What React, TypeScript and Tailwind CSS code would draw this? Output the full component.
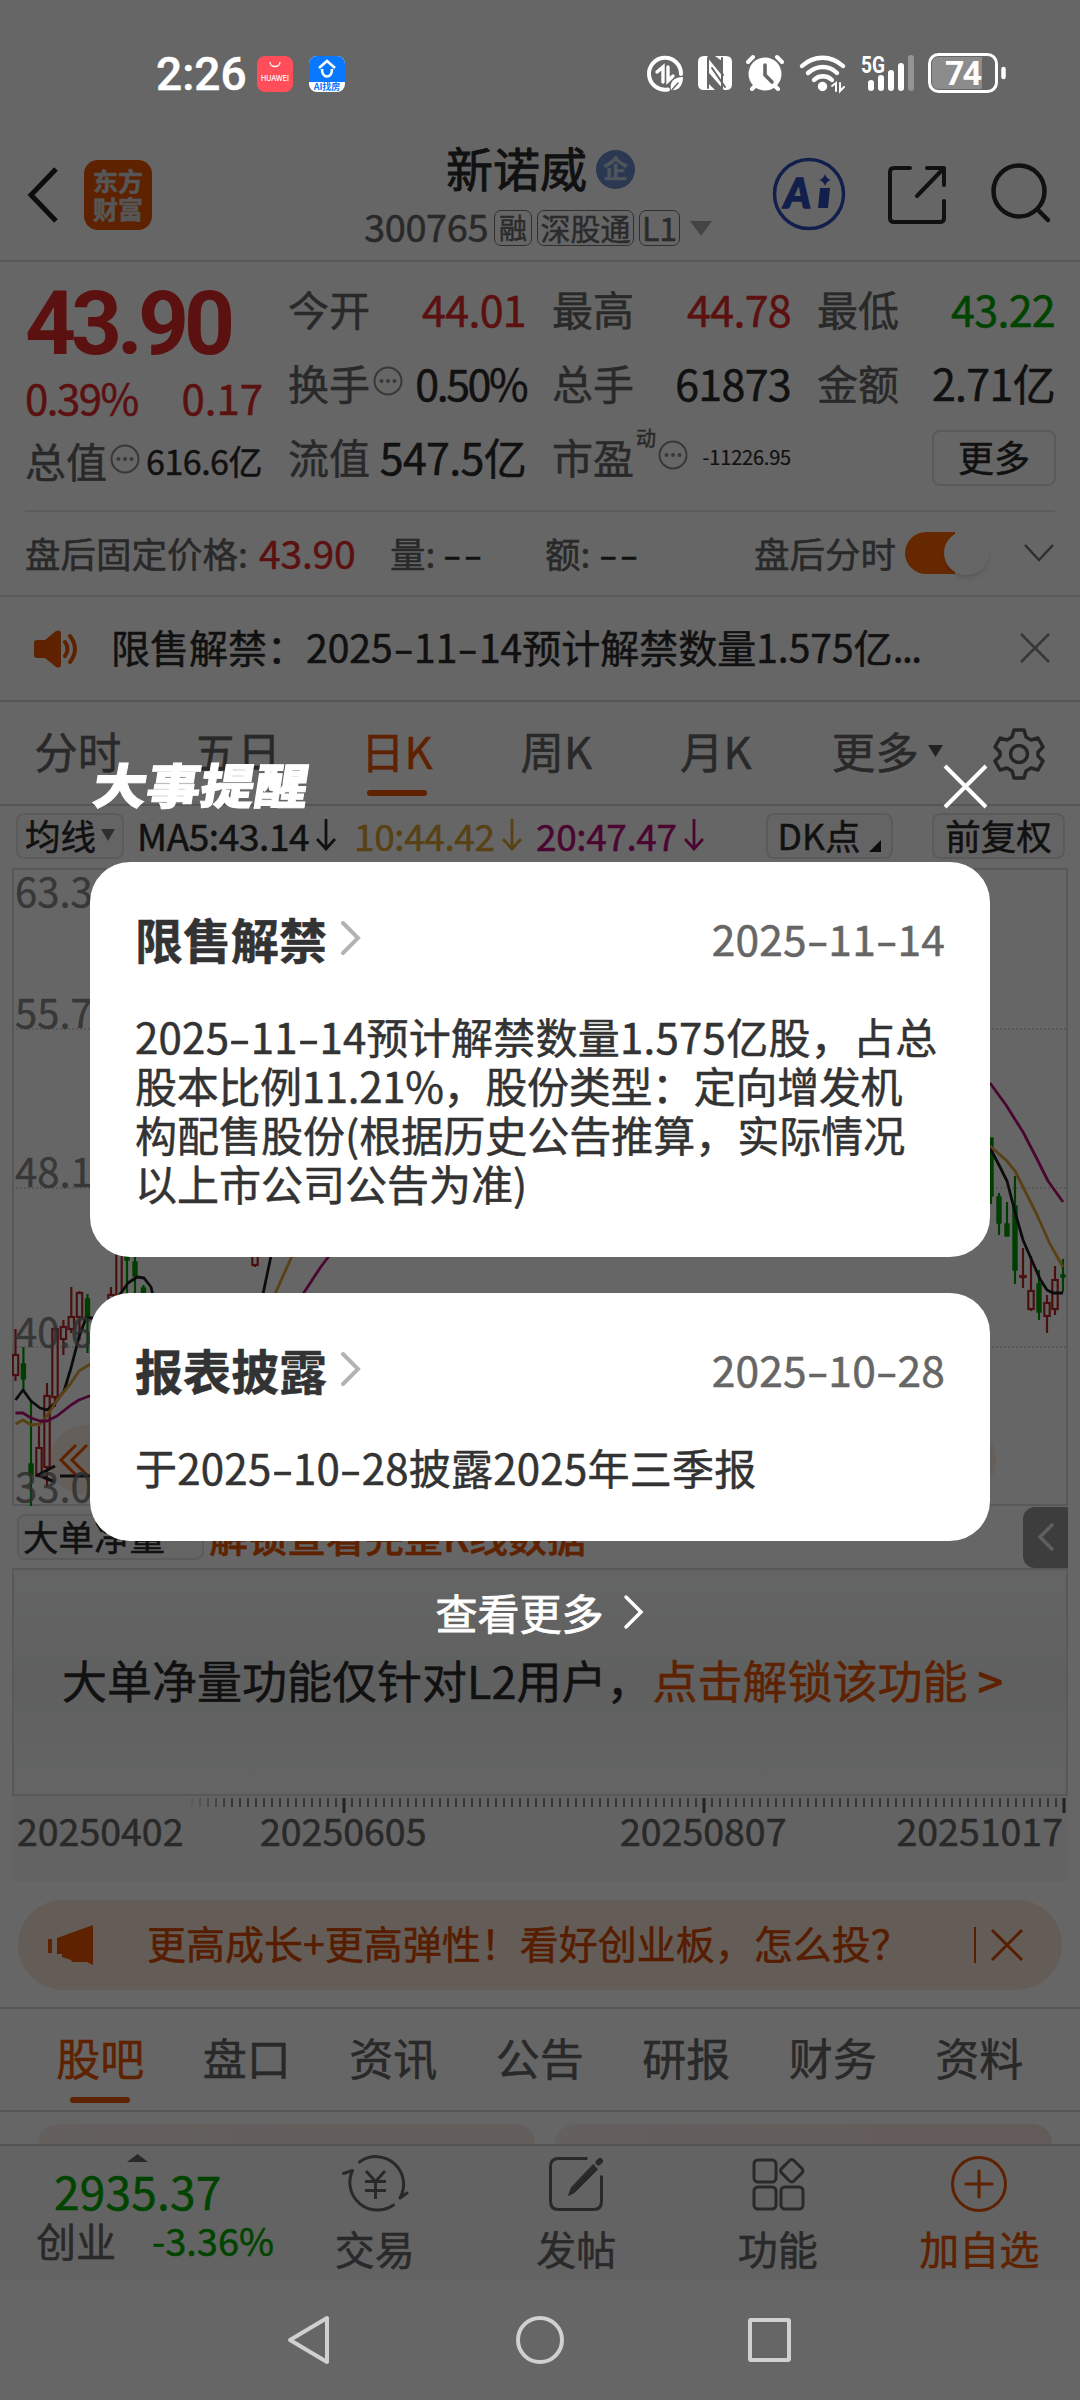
import type { ReactNode } from 'react'
import clsx from 'clsx'

type Candle = {
    x: number
    high: number
    low: number
    top: number
    bottom: number
    up: boolean
}

interface Reminder {
    title: string
    date: string
    lines: string[]
}

const CANDLES: Candle[] = [
    { x: 15.5, high: 1329, low: 1381, top: 1355, bottom: 1375, up: true },
    { x: 23.4, high: 1347, low: 1390, top: 1364, bottom: 1379, up: false },
    { x: 31, high: 1402, low: 1506, top: 1464, bottom: 1475, up: false },
    { x: 39, high: 1426, low: 1476, top: 1448, bottom: 1476, up: true },
    { x: 47, high: 1383, low: 1486, top: 1396, bottom: 1467, up: true },
    { x: 55, high: 1329, low: 1407, top: 1329, bottom: 1397, up: true },
    { x: 63.4, high: 1320, low: 1355, top: 1327, bottom: 1339, up: true },
    { x: 71.3, high: 1287, low: 1333, top: 1317, bottom: 1329, up: true },
    { x: 79.5, high: 1291, low: 1340, top: 1293, bottom: 1317, up: true },
    { x: 87.5, high: 1294, low: 1353, top: 1299, bottom: 1318, up: false },
    { x: 111, high: 1287, low: 1310, top: 1295, bottom: 1307, up: true },
    { x: 119, high: 1240, low: 1300, top: 1240, bottom: 1300, up: true },
    { x: 127, high: 1240, low: 1294, top: 1240, bottom: 1260, up: false },
    { x: 135, high: 1250, low: 1300, top: 1262, bottom: 1276, up: false },
    { x: 143.5, high: 1285, low: 1300, top: 1288, bottom: 1300, up: false },
    { x: 255, high: 1240, low: 1267, top: 1240, bottom: 1265, up: true },
    { x: 991, high: 1138, low: 1204, top: 1138, bottom: 1196, up: false },
    { x: 999, high: 1193, low: 1235, top: 1197, bottom: 1223, up: false },
    { x: 1007, high: 1202, low: 1236, top: 1224, bottom: 1236, up: false },
    { x: 1015, high: 1176, low: 1284, top: 1206, bottom: 1270, up: false },
    { x: 1023, high: 1248, low: 1288, top: 1276, bottom: 1277, up: true },
    { x: 1031, high: 1256, low: 1311, top: 1291, bottom: 1309, up: true },
    { x: 1039, high: 1270, low: 1320, top: 1284, bottom: 1312, up: false },
    { x: 1047, high: 1295, low: 1333, top: 1303, bottom: 1316, up: true },
    { x: 1055, high: 1266, low: 1315, top: 1280, bottom: 1309, up: true },
    { x: 1063, high: 1259, low: 1292, top: 1275, bottom: 1277, up: false },
]

const MA_LINES = [
    { color: '#202020', points: '15.5,1400 23,1390 31,1401 40,1408 47,1410 55,1403 64,1391 71,1368 79,1337 86,1318 95,1318 108,1309 121,1293 128,1283 137,1277 144,1278 151,1287 154,1300' },
    { color: '#202020', points: '263,1294 271,1256' },
    { color: '#202020', points: '990,1148 1000,1167 1007,1181 1015,1212 1023,1240 1033,1263 1040,1279 1047,1290 1053,1293 1063,1293' },
    { color: '#dda233', points: '15.5,1424 23,1420 31,1425 40,1424 47,1416 57,1400 71,1383 79,1371 92,1363' },
    { color: '#dda233', points: '275,1294 292,1256' },
    { color: '#dda233', points: '990,1146 1006,1160 1015,1171 1023,1187 1037,1215 1050,1244 1063,1267' },
    { color: '#b80f7a', points: '15.5,1413 23,1413 31,1418 40,1421 47,1421 57,1416 71,1405 79,1400 92,1395' },
    { color: '#b80f7a', points: '303,1294 320,1268 329,1256' },
    { color: '#b80f7a', points: '990,1083 1006,1105 1023,1132 1037,1159 1048,1181 1063,1202' },
]

const PRICE_LABELS = [
    { text: '63.36', y: 907 },
    { text: '55.77', y: 1028 },
    { text: '48.18', y: 1187 },
    { text: '40.60', y: 1347 },
    { text: '33.01', y: 1502 },
]

const REMINDERS: Reminder[] = [
    {
        title: '限售解禁',
        date: '2025-11-14',
        lines: [
            '2025-11-14预计解禁数量1.575亿股，占总',
            '股本比例11.21%，股份类型：定向增发机',
            '构配售股份(根据历史公告推算，实际情况',
            '以上市公司公告为准)',
        ],
    },
    { title: '报表披露', date: '2025-10-28', lines: ['于2025-10-28披露2025年三季报'] },
]

const CHART_TABS = ['分时', '五日', '日K', '周K', '月K', '更多']
const INFO_TABS = ['股吧', '盘口', '资讯', '公告', '研报', '财务', '资料']

// Dates use a wide hyphen, close to the width of a digit
function Dashed({ text }: { text: string }) {
    return (
        <>
            {text.split('-').map((part, i) => (
                <span key={i}>
                    {i > 0 && <span className="inline-block w-[21.5px] text-center tracking-normal scale-x-150">-</span>}
                    {part}
                </span>
            ))}
        </>
    )
}

function InfoDot() {
    return (
        <svg className="w-[30px] h-[30px] ml-[3px] mb-[4px] shrink-0" viewBox="0 0 30 30" fill="none" stroke="#8c8c8c" strokeWidth="2">
            <circle cx="15" cy="15" r="13.5" />
            <g fill="#8c8c8c" stroke="none">
                <circle cx="8.5" cy="15" r="2" />
                <circle cx="15" cy="15" r="2" />
                <circle cx="21.5" cy="15" r="2" />
            </g>
        </svg>
    )
}

function Stat({ label, value, tone = 'text-[#2b2b2b]', dot = false }: { label: string; value: string; tone?: string; dot?: boolean }) {
    return (
        <div className="flex items-center justify-between text-[41px] leading-none whitespace-nowrap">
            <span className="flex items-center text-[#666]">
                {label}
                {dot && <InfoDot />}
            </span>
            <span className={clsx('text-[43px] leading-[41px]', dot ? 'tracking-[-2.5px]' : 'tracking-[-0.7px]', tone)}>{value}</span>
        </div>
    )
}

function StatusBar() {
    return (
        <div className="relative z-20 h-[116px] pt-[53px] pl-[156px] pr-[72px] flex items-start justify-between text-white">
            <div className="flex items-center h-[42px]">
                <span className="w-[101px] text-[46px] leading-none font-medium font-['Roboto']">2:26</span>
                <div className="w-9 h-9 rounded-[8px] bg-[#ff4d5a] flex flex-col items-center">
                    <svg className="w-4 h-4 mt-1" viewBox="0 0 16 16" fill="none" stroke="#fff" strokeWidth="1.3">
                        <path d="M3 2c0 6 10 6 10 0" />
                    </svg>
                    <span className="text-[7px] leading-none font-medium -mt-[1px] font-['Inter'] [-webkit-text-stroke:0px]">HUAWEI</span>
                </div>
                <div className="ml-4 w-9 h-9 rounded-[8px] bg-white overflow-hidden flex flex-col items-center">
                    <div className="w-9 h-[26px] bg-[#0878ff] flex justify-center">
                        <svg className="w-6 h-6" viewBox="0 0 24 24" fill="none" stroke="#fff" strokeWidth="2.6">
                            <path d="M4 12 12 5l8 7M7 13c0 10 10 10 10 0" />
                        </svg>
                    </div>
                    <span className="text-[9px] leading-[10px] font-bold text-[#0878ff] [-webkit-text-stroke:0px]">AI找房</span>
                </div>
            </div>
            <svg className="w-[364px] h-[42px]" viewBox="644 53 364 42" fill="none" stroke="#fff" strokeLinecap="round">
                <path d="M668 89.500A16 16 0 1 1 681 74" strokeWidth="4" />
                <path d="M657 72l6-5v15M668 67v14l5-5" strokeWidth="3.400" />
                <path d="M671 90c-2-9 4-13 12-13 0 9-5 14-12 13z" fill="#fff" stroke="none" />
                <path d="M672 90l6-7" stroke="#666" strokeWidth="1.500" />
                <path d="M704 56h3l15 16V61l-7-5h11q6 0 6 6v22q0 6-6 6h-2L709 73v11l6 6h-11q-6 0-6-6V62q0-6 6-6z" fill="#fff" stroke="none" />
                <path d="M708 58v30M722 58v30" stroke="#666" strokeWidth="2" />
                <path d="M712 68l13 19M710 59l13 16" stroke="#666" strokeWidth="2" />
                <circle cx="765" cy="74" r="16.500" fill="#fff" stroke="none" />
                <path d="M748 62l5-5M782 62l-5-5" strokeWidth="4" />
                <path d="M752 89l4-4M778 89l-4-4" strokeWidth="4" />
                <path d="M765 65v10l7 7" stroke="#666" strokeWidth="3.600" />
                <path d="M802 66c12-11 29-11 41 0M808 73c9-8 21-8 29 0M814 80c5-5 13-5 18 0" strokeWidth="4.400" />
                <circle cx="822.500" cy="86.500" r="4.700" fill="#fff" stroke="none" />
                <path d="M832 86l4-3v8M840 83v8l4-4" strokeWidth="2" />
                <text x="861" y="73" fill="#fff" stroke="none" fontFamily="Roboto" fontWeight="700" fontSize="24" textLength="24" lengthAdjust="spacingAndGlyphs">5G</text>
                <path d="M871 83v5M881 78v10M891 73v15M901 66v22" strokeWidth="6" />
                <path d="M911 58v30" stroke="#949494" strokeWidth="6" />
                <rect x="929.500" y="54.500" width="67" height="37" rx="9" strokeWidth="3" />
                <path d="M939 57h43v32h-43q-7 0-7-7V64q0-7 7-7z" fill="#8c8c8c" stroke="none" />
                <path d="M1003.500 69v8" strokeWidth="4.500" />
                <text x="945" y="85" fill="#fff" stroke="none" fontFamily="Roboto" fontWeight="700" fontSize="34" textLength="37">74</text>
            </svg>
        </div>
    )
}

function Header() {
    return (
        <header className="h-[146px] shrink-0 border-b-2 border-[#dcdcdc] flex items-start px-[26px] text-[#333]">
            <svg className="w-8 h-14 mt-[51px]" viewBox="0 0 32 56" fill="none" stroke="#222" strokeWidth="5">
                <path d="M30 2 5 28l25 26" />
            </svg>
            <div className="mt-[44px] ml-[26px] w-[68px] h-[70px] rounded-[14px] bg-[#ea5504] text-[#d8d8d8] text-[25px] leading-[28px] font-bold flex flex-col items-center justify-center pb-[3px]">
                <span>东方</span>
                <span>财富</span>
            </div>
            <div className="ml-[212px] w-[354px]">
                <div className="mt-[26px] ml-[82px] h-[54px] flex items-center">
                    <span className="mb-[5px] text-[47px] leading-none text-[#2b2b2b] [-webkit-text-stroke:0.9px]">新诺威</span>
                    <span className="ml-[9px] pb-[3px] w-[39px] h-[39px] rounded-full bg-[#6a8ccc] text-[#c3cfe6] text-[25px] leading-none font-bold flex items-center justify-center">企</span>
                </div>
                <div className="mt-[14px] h-[36px] flex items-center text-[30px] leading-none text-[#6b6b6b] whitespace-nowrap">
                    <span className="mb-[4px] w-[130px] text-[38px] tracking-[-0.4px] text-[#666]">300765</span>
                    <span className="pb-[3px] w-[38px] h-9 border-[1.5px] border-[#777] rounded-[7px] flex items-center justify-center text-[28px]">融</span>
                    <span className="pb-[3px] ml-[5px] w-[97px] h-9 border-[1.5px] border-[#777] rounded-[7px] flex items-center justify-center">深股通</span>
                    <span className="pb-[3px] ml-[5px] w-[41px] h-9 border-[1.5px] border-[#777] rounded-[7px] flex items-center justify-center text-[32px]">L1</span>
                    <svg className="ml-[10px] w-[22px] h-[15px]" viewBox="0 0 22 15" fill="#aaa">
                        <path d="M0 0h22L11 15z" />
                    </svg>
                </div>
            </div>
            <svg className="mt-[41px] ml-[54px] w-[74px] h-[74px]" viewBox="0 0 74 74" fill="#2f4fbd">
                <circle cx="37" cy="37" r="34.500" fill="none" stroke="#2f4fbd" strokeWidth="3.500" />
                <text x="12" y="51" fontFamily="Lato" fontWeight="900" fontStyle="italic" fontSize="41" stroke="#2f4fbd" strokeWidth="1.500">A</text>
                <path d="M48 31h10l-2 20H46z" />
                <path d="M53 17q1.500 5 6 6-4.500 1-6 6-1.500-5-6-6 4.500-1 6-6z" />
            </svg>
            <svg className="mt-[47px] ml-[39px] w-[64px] h-[64px]" viewBox="0 0 64 64" fill="none" stroke="#2b2b2b" strokeWidth="4" strokeLinecap="round" strokeLinejoin="round">
                <path d="M25 5H9q-4 0-4 4v46q0 4 4 4h46q4 0 4-4V38M42 5h17v17M59 5 32 33" />
            </svg>
            <svg className="mt-[46px] ml-[39px] w-[64px] h-[64px] shrink-0" viewBox="0 0 64 64" fill="none" stroke="#2b2b2b" strokeWidth="4.500" strokeLinecap="round">
                <circle cx="31" cy="29" r="25.500" />
                <path d="m50 48 10 10" />
            </svg>
        </header>
    )
}

function Quote() {
    return (
        <section className="mx-[25px] h-[250px] shrink-0 border-b-2 border-[#e6e6e6] pt-[16px] grid grid-cols-[237px_238px_239px_238px] gap-x-[26px]">
            <div className="flex flex-col text-[#e52b2b]">
                <span className="h-[88px] mt-[2px] text-[89px] leading-[88px] font-bold font-['Roboto'] tracking-[-5px] [-webkit-text-stroke:0px]">43.90</span>
                <div className="mt-[7px] h-[44px] flex items-center justify-between text-[42px] leading-none">
                    <span className="tracking-[-1.5px]">0.39%</span>
                    <span className="-mr-px">0.17</span>
                </div>
                <div className="mt-[21px] flex items-center justify-between text-[41px] leading-none text-[#666] whitespace-nowrap">
                    <span className="flex items-center">总值<InfoDot /></span>
                    <span className="text-[34px] text-[#2b2b2b] tracking-[-0.500px]">616.6亿</span>
                </div>
            </div>
            <div className="flex flex-col gap-[33px] pt-[10px]">
                <Stat label="今开" value="44.01" tone="text-[#e52b2b]" />
                <Stat label="换手" value="0.50%" dot />
                <Stat label="流值" value="547.5亿" />
            </div>
            <div className="flex flex-col gap-[33px] pt-[10px]">
                <Stat label="最高" value="44.78" tone="text-[#e52b2b]" />
                <Stat label="总手" value="61873" />
                <div className="h-[41px] flex items-center text-[41px] leading-none text-[#666] whitespace-nowrap">
                    市盈
                    <span className="text-[20px] -mt-[38px] ml-[2px]">动</span>
                    <span className="-ml-[1px] flex"><InfoDot /></span>
                    <span className="ml-auto text-[20px] text-[#2b2b2b] tracking-[-0.200px] [-webkit-text-stroke:0.2px]">-11226.95</span>
                </div>
            </div>
            <div className="flex flex-col gap-[33px] pt-[10px]">
                <Stat label="最低" value="43.22" tone="text-[#00aa00]" />
                <Stat label="金额" value="2.71亿" />
                <button className="self-end -mt-[6px] pb-[5px] -mr-px w-[124px] h-[56px] rounded-[8px] border-2 border-[#e0e0e0] text-[36px] leading-none text-[#2b2b2b]">更多</button>
            </div>
        </section>
    )
}

function AfterHours() {
    return (
        <section className="h-[85px] shrink-0 border-b-2 border-[#e6e6e6] pb-[2px] pl-[25px] pr-[26px] flex items-center text-[35.5px] leading-none text-[#666] whitespace-nowrap">
            <span className="w-[234px]">盘后固定价格:</span>
            <span className="w-[131px] text-[39px] text-[#e52b2b] tracking-[-0.2px]">43.90</span>
            <span className="w-[53px]">量:</span>
            <span className="w-[102px] text-[#2b2b2b]"><span className="inline-block origin-left scale-x-150 tracking-[1.500px]">--</span></span>
            <span className="w-[54px]">额:</span>
            <span className="w-[155px] text-[#2b2b2b]"><span className="inline-block origin-left scale-x-150 tracking-[1.500px]">--</span></span>
            <span>盘后分时</span>
            <span className="ml-[9px] w-[84px] h-[42px] rounded-full bg-gradient-to-r from-[#ff6400] from-60% to-white to-60% flex justify-end">
                <span className="w-[45px] h-[44px] -mt-px rounded-full bg-white shadow-md" />
            </span>
            <svg className="ml-auto w-[30px] h-[18px]" viewBox="0 0 30 18" fill="none" stroke="#777" strokeWidth="2.500">
                <path d="m1 1 14 15L29 1" />
            </svg>
        </section>
    )
}

function Notice() {
    return (
        <section className="h-[105px] shrink-0 border-b-2 border-[#d4d4d4] pl-[34px] pr-[29px] flex items-center">
            <svg className="w-[46px] h-[38px]" viewBox="0 0 46 38" fill="#ea5504">
                <path d="M3 10h8L22 1q5-2 5 3v30q0 5-5 3l-11-9H3q-3 0-3-3V13q0-3 3-3z" />
                <path d="M31 12q5 7 0 14M36 6q10 13 0 26" fill="none" stroke="#ea5504" strokeWidth="4" strokeLinecap="round" />
            </svg>
            <span className="ml-[31px] mb-[4px] text-[39px] leading-none text-[#2b2b2b] whitespace-nowrap">
                限售解禁：<Dashed text="2025-11-14预计解禁数量1.575亿" />
                <span className="tracking-[-1.500px]">...</span>
            </span>
            <svg className="ml-auto w-[32px] h-[32px] mb-[2px]" viewBox="0 0 32 32" stroke="#8a8a8a" strokeWidth="2.600">
                <path d="m2 2 28 28M30 2 2 30" />
            </svg>
        </section>
    )
}

function ChartTabs() {
    return (
        <nav className="h-[104px] shrink-0 border-b-2 border-[#d4d4d4] flex text-[43.500px] leading-none text-[#666]">
            {CHART_TABS.map((tab) => (
                <div key={tab} className={clsx('w-[159.500px] flex flex-col items-center pr-[4px]', tab === '日K' && 'text-[#ea5504]')}>
                    <span className="mt-[26px] h-[46px] flex items-center">
                        {tab}
                        {tab === '更多' && (
                            <svg className="ml-[9px] -mr-[24px] w-[15px] h-[12px]" viewBox="0 0 15 12" fill="#555">
                                <path d="M0 0h15L7.500 12z" />
                            </svg>
                        )}
                    </span>
                    {tab === '日K' && <span className="mt-[16px] w-[60px] h-[6px] rounded-full bg-[#ea5504]" />}
                </div>
            ))}
            <svg className="mt-[25px] ml-[35px] w-[54px] h-[54px]" viewBox="0 0 54 54" fill="none" stroke="#5c5c5c" strokeWidth="3.500" strokeLinejoin="round">
                <path d="M22 3h10l2 7 5 3 7-2 5 9-5 5v4l5 5-5 9-7-2-5 3-2 7H22l-2-7-5-3-7 2-5-9 5-5v-4l-5-5 5-9 7 2 5-3z" />
                <circle cx="27" cy="27" r="8.500" />
            </svg>
        </nav>
    )
}

function Pill({ className, children }: { className?: string; children: ReactNode }) {
    return (
        <span className={clsx('h-[46px] pb-[3px] rounded-[8px] border-2 border-[#e4e4e4] bg-[#fafafa] flex items-center text-[35.500px] text-[#2b2b2b]', className)}>
            {children}
        </span>
    )
}

function DownArrow() {
    return (
        <svg className="ml-[7px] w-[20px] h-[32px] shrink-0" viewBox="0 0 20 32" fill="none" stroke="currentColor" strokeWidth="2.800">
            <path d="M10 0v29M1 20l9 10 9-10" />
        </svg>
    )
}

function MaRow() {
    return (
        <div className="h-[62px] shrink-0 pl-[16px] pr-[15px] pt-[7px] flex items-start leading-none whitespace-nowrap">
            <Pill className="w-[108px] justify-center">
                均线
                <svg className="ml-[5px] w-[14px] h-[12px]" viewBox="0 0 14 12" fill="#777"><path d="M0 0h14L7 12z" /></svg>
            </Pill>
            <div className="h-[44px] ml-[13px] flex items-center text-[37px] tracking-[-0.400px]">
                <span className="w-[217px] flex items-center text-[#2b2b2b]">MA5:43.14<DownArrow /></span>
                <span className="w-[182px] flex items-center text-[#dda233]">10:44.42<DownArrow /></span>
                <span className="w-[190px] flex items-center text-[#b80f7a]">20:47.47<DownArrow /></span>
            </div>
            <Pill className="ml-auto w-[127px] justify-center">
                DK点
                <svg className="ml-[9px] mt-[22px] w-[12px] h-[12px]" viewBox="0 0 12 12" fill="#222"><path d="M12 0v12H0z" /></svg>
            </Pill>
            <Pill className="ml-[39px] w-[133px] justify-center">前复权</Pill>
        </div>
    )
}

function KLineChart() {
    return (
        <svg className="ml-3 w-[1056px] h-[638px] shrink-0" viewBox="12 868 1056 638" fill="none">
            <rect x="13" y="869" width="1054" height="636" stroke="#dcdcdc" strokeWidth="2" />
            {[1029, 1188, 1347].map((y) => (
                <path key={y} d={`M12 ${y}H1068`} stroke="#bbb" strokeWidth="1" strokeDasharray="2 2" />
            ))}
            {CANDLES.map((c) => {
                const color = c.up ? '#b82a2a' : '#009a00'
                return (
                    <g key={c.x} stroke={color} strokeWidth="2.200">
                        <path d={c.up ? `M${c.x} ${c.high}V${c.top}M${c.x} ${c.bottom}V${c.low}` : `M${c.x} ${c.high}V${c.low}`} />
                        <rect
                            x={c.x - (c.up ? 2.7 : 2)}
                            y={c.top}
                            width={c.up ? 5.4 : 4}
                            height={c.bottom - c.top}
                            fill={c.up ? 'none' : color}
                            strokeWidth={c.up ? 2.2 : 1.4}
                        />
                    </g>
                )
            })}
            {MA_LINES.map((line) => (
                <polyline key={line.points} points={line.points} stroke={line.color} strokeWidth="2.800" strokeLinejoin="round" />
            ))}
            <rect x="50" y="1425" width="946" height="70" rx="35" fill="#ea5504" opacity="0.1" />
            <path d="m76 1445-15 15 15 15M87 1445l-15 15 15 15" stroke="#ea5504" strokeWidth="3" />
            <path d="m55 1466-17 9 17 7M60 1476h32" stroke="#222" strokeWidth="3" />
            {PRICE_LABELS.map((l) => (
                <text key={l.text} x="15" y={l.y} fill="#777" fillOpacity="0.850" stroke="#777" strokeOpacity="0.6" strokeWidth="0.600" fontSize="40" fontFamily="Noto Sans CJK SC">{l.text}</text>
            ))}
        </svg>
    )
}

function BigOrders() {
    return (
        <>
            <div className="h-[62px] shrink-0 pl-[17px] pr-3 flex items-center leading-none">
                <Pill className="w-[187px] pl-[4px]">
                    大单净量
                    <svg className="ml-[12px] w-[14px] h-[12px]" viewBox="0 0 14 12" fill="#777"><path d="M0 0h14L7 12z" /></svg>
                </Pill>
                <span className="ml-[5px] mb-[4px] text-[39px] font-medium text-[#ea5504]">解锁查看完整K线数据</span>
                <span className="ml-auto w-[45px] h-[61px] rounded-l-[12px] bg-[#989898] flex items-center justify-center">
                    <svg className="w-[16px] h-[28px]" viewBox="0 0 16 28" fill="none" stroke="#eee" strokeWidth="3.500" strokeLinecap="round">
                        <path d="M14 2 2 14l12 12" />
                    </svg>
                </span>
            </div>
            <div className="mx-3 h-[228px] shrink-0 border-2 border-[#dcdcdc] bg-gradient-to-b from-[#fafbfb] via-[#eff0f0] to-[#f9fbfa] flex items-center pb-[6px] pl-[48px] text-[45px] leading-none whitespace-nowrap">
                <span className="text-[#2b2b2b]">大单净量功能仅针对L2用户，</span>
                <span className="ml-[1px] text-[#ea5504]">点击解锁该功能 <b className="font-medium">&gt;</b></span>
            </div>
            <div className="mx-3 h-[86px] shrink-0 bg-[#f8f8f8]">
                <svg className="w-[1056px] h-[20px]" viewBox="12 1796 1056 20" stroke="#888">
                    {Array.from({ length: 110 }, (_, i) => {
                        const major = i % 45 === 0
                        return (
                            <path
                                key={i}
                                d={`M${1064 - i * 8} 1798V${major ? 1813 : 1807}`}
                                strokeWidth={major ? 3 : 2}
                                stroke={major ? '#555' : '#888'}
                                opacity={i > 104 ? (110 - i) / 6 : 1}
                            />
                        )
                    })}
                </svg>
                <div className="pl-[5px] pr-[5px] h-[34px] -mt-[3px] flex text-[37.500px] leading-[34px] text-[#666]">
                    <span className="w-[243px]">20250402</span>
                    <span className="w-[360px]">20250605</span>
                    <span>20250807</span>
                    <span className="ml-auto">20251017</span>
                </div>
            </div>
        </>
    )
}

function PromoBanner() {
    return (
        <div className="mx-[18px] mt-[18px] h-[90px] shrink-0 rounded-full bg-[#f9e5d7] pl-[30px] pr-[38px] flex items-center text-[#d84a02]">
            <svg className="w-[46px] h-[40px]" viewBox="0 0 46 40" fill="#ea5504">
                <path d="M0 14h4v14H0zM9 13 45 0v40l-6-3H24l-1-2-9-3v-3H9z" />
            </svg>
            <span className="ml-[53px] mb-[5px] text-[39px] leading-none whitespace-nowrap">更高成长+更高弹性！看好创业板，怎么投？</span>
            <span className="ml-auto w-[2px] h-[36px] bg-[#d84a02]" />
            <svg className="ml-[14px] w-[34px] h-[34px] shrink-0" viewBox="0 0 34 34" stroke="#d84a02" strokeWidth="3">
                <path d="m2 2 30 30M32 2 2 32" />
            </svg>
        </div>
    )
}

function InfoTabs() {
    return (
        <>
            <nav className="mt-[17px] h-[105px] shrink-0 border-y-2 border-[#d4d4d4] pl-[27px] flex text-[44px] leading-none text-[#666]">
                {INFO_TABS.map((tab, i) => (
                    <div key={tab} className={clsx('w-[146.500px] flex flex-col items-center', i === 0 && 'text-[#ea5504]')}>
                        <span className="mt-[26px]">{tab}</span>
                        {i === 0 && <span className="mt-[18px] w-[60px] h-[6px] rounded-full bg-[#ea5504]" />}
                    </div>
                ))}
            </nav>
            <div className="h-[32px] shrink-0 pt-[12px] pl-[38px] flex gap-5">
                <span className="w-[497px] rounded-t-[20px] bg-gradient-to-r from-[#f9efec] to-[#f7e9e3]" />
                <span className="w-[497px] rounded-t-[20px] bg-gradient-to-r from-[#f9efec] to-[#f7e3e0]" />
            </div>
        </>
    )
}

function Action({ label, active = false, children }: { label: string; active?: boolean; children: ReactNode }) {
    return (
        <div className={clsx('w-[201.500px] flex flex-col items-center', active ? 'text-[#ea5504]' : 'text-[#666]')}>
            <svg className="mt-[6px] w-[70px] h-[64px]" viewBox="0 0 70 64" fill="none" stroke="currentColor" strokeWidth="3" strokeLinecap="round" strokeLinejoin="round">
                {children}
            </svg>
            <span className="mt-[12px] text-[40px] leading-none">{label}</span>
        </div>
    )
}

function BottomBar() {
    return (
        <footer className="h-[136px] shrink-0 border-t-2 border-[#d0d0d0] bg-[#f7f7f7] flex">
            <div className="w-[274px] shrink-0 pl-[36px]">
                <svg className="mt-[8px] ml-[91px] w-[21px] h-[8px]" viewBox="0 0 21 8" fill="#666"><path d="M0 8h21L10.500 0z" /></svg>
                <div className="mt-[4px] ml-[18px] text-[46px] leading-[48px] text-[#00aa00] tracking-[0.200px]">2935.37</div>
                <div className="mt-[6px] flex items-center justify-between leading-none text-[40px] text-[#666]">
                    创业
                    <span className="text-[38px] text-[#00aa00]">-3.36%</span>
                </div>
            </div>
            <Action label="交易">
                <path d="M19.500 10A27.700 27.700 0 0 1 60 46l7-5M53.500 53A27.700 27.700 0 0 1 12.500 18.500l-9 3" />
                <path d="m26 19 9.500 10.500L45 19M35.500 29.500V47M25 29.500h21M25 38.500h21" strokeLinecap="butt" />
            </Action>
            <Action label="发帖">
                <g transform="translate(-.5 -4.500)">
                    <path d="M47 11H18q-8 0-8 8v35q0 8 8 8h35q8 0 8-8V28" strokeLinecap="butt" />
                    <path d="m53 17 4 5-23 23-6 3 3-8z" fill="currentColor" strokeWidth="1" />
                    <path d="m58 15 1.500-1.500" strokeWidth="6" />
                </g>
            </Action>
            <Action label="功能">
                <g transform="translate(0 -4)">
                    <rect x="11" y="12" width="22" height="22" rx="4" />
                    <rect x="11" y="39" width="22" height="22" rx="4" />
                    <rect x="38" y="39" width="22" height="22" rx="4" />
                    <rect x="40" y="14" width="17.500" height="17.500" rx="3" transform="rotate(45 48.750 22.750)" />
                </g>
            </Action>
            <Action label="加自选" active>
                <circle cx="35" cy="32" r="26.500" />
                <path d="M35 19v26M22 32h26" strokeWidth="3.200" />
            </Action>
        </footer>
    )
}

function SystemNav() {
    return (
        <div className="relative z-20 h-[120px] shrink-0 flex justify-center pt-[33px]">
            <svg className="w-[540px] h-[54px]" viewBox="270 2313 540 54" fill="none" stroke="#d0d0d0" strokeWidth="4" strokeLinejoin="round">
                <path d="M327 2318v44l-37-22z" />
                <circle cx="540" cy="2340" r="22" />
                <rect x="750" y="2320" width="39" height="40" rx="1" />
            </svg>
        </div>
    )
}

function ReminderCard({ title, date, lines }: Reminder) {
    return (
        <article className="rounded-[40px] bg-white px-[45px] pt-[52px] pb-[50px]">
            <div className="h-[48px] flex items-center">
                <h3 className="text-[48px] leading-none font-bold text-[#333]">{title}</h3>
                <svg className="ml-[12px] w-[22px] h-[36px]" viewBox="0 0 22 36" fill="none" stroke="#b3b3b3" strokeWidth="4" strokeLinecap="round">
                    <path d="m4 3 15 15L4 33" />
                </svg>
                <span className="ml-auto text-[42.500px] leading-none text-[#666] tracking-[0.200px]"><Dashed text={date} /></span>
            </div>
            <div className="mt-[49px] text-[42px] leading-[49px] text-[#333] whitespace-nowrap">
                {lines.map((line) => (
                    <p key={line} className={clsx(line.includes('-') && 'tracking-[0.250px]', line.includes('%') && 'tracking-[-0.300px]')}>
                        <Dashed text={line} />
                    </p>
                ))}
            </div>
        </article>
    )
}

function ReminderDialog() {
    return (
        <div className="absolute inset-0 z-10 bg-black/60 px-[90px] pt-[760px]">
            <div className="h-[102px] flex items-start justify-between text-white">
                <h2 className="-mt-[3px] ml-[4px] text-[48px] leading-[52px] font-black -skew-x-8 scale-x-112 origin-left [-webkit-text-stroke:1px]">大事提醒</h2>
                <svg className="mt-[4px] mr-[2px] w-[45px] h-[45px]" viewBox="0 0 45 45" stroke="#fff" strokeWidth="4">
                    <path d="m2 2 41 41M43 2 2 43" />
                </svg>
            </div>
            <div className="flex flex-col gap-9">
                {REMINDERS.map((r) => (
                    <ReminderCard key={r.title} {...r} />
                ))}
            </div>
            <div className="mt-[50px] flex items-center justify-center text-[42px] leading-none text-white">
                <span className="[-webkit-text-stroke:0.8px]">查看更多</span>
                <svg className="ml-[19px] w-[22px] h-[36px]" viewBox="0 0 22 36" fill="none" stroke="#fff" strokeWidth="3.500" strokeLinecap="round">
                    <path d="m3 3 15 15L3 33" />
                </svg>
            </div>
        </div>
    )
}

export default function App() {
    return (
        <div className="relative w-[1080px] h-[2400px] overflow-hidden bg-white flex flex-col font-['Noto_Sans_CJK_SC',sans-serif] [-webkit-text-stroke:0.5px]">
            <StatusBar />
            <Header />
            <Quote />
            <AfterHours />
            <Notice />
            <ChartTabs />
            <MaRow />
            <KLineChart />
            <BigOrders />
            <PromoBanner />
            <InfoTabs />
            <BottomBar />
            <SystemNav />
            <ReminderDialog />
        </div>
    )
}
